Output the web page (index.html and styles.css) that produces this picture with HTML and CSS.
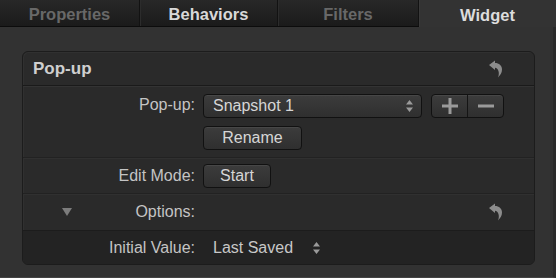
FILE: index.html
```html
<!DOCTYPE html>
<html>
<head>
<meta charset="utf-8">
<link rel="stylesheet" href="styles.css">
</head>
<body>
<div class="tabs">
  <div class="tab t1">Properties</div>
  <div class="tab t2 bright">Behaviors</div>
  <div class="tab t3">Filters</div>
  <div class="tab t4 selected">Widget</div>
</div>
<div class="main">
  <div class="panel">
    <div class="header">
      <span class="title">Pop-up</span>
      <svg class="undo" width="14" height="18" viewBox="0 0 14 18"><path d="M0 5 L6 0.5 L6 3 C10 3 13 5.5 13 9.5 C13 12.5 11.5 15 9 17.5 C10 14.8 10 12.8 9.5 11.2 C9 9.2 7.6 7.8 6 7.8 L6 10 Z" fill="#8c8c8c"/></svg>
    </div>
    <div class="row popuprow">
      <div class="label">Pop-up:</div>
      <div class="ctrls">
        <div class="line">
          <div class="btn popup"><span>Snapshot 1</span>
            <svg width="9" height="14" viewBox="0 0 9 14"><path d="M4.5 1 L8 5.5 L1 5.5 Z M4.5 13 L8 8.5 L1 8.5 Z" fill="#9a9a9a"/></svg>
          </div>
          <div class="btn pm">
            <div class="seg"><svg width="16" height="16" viewBox="0 0 16 16"><path d="M6.5 0 H9.5 V6.5 H16 V9.5 H9.5 V16 H6.5 V9.5 H0 V6.5 H6.5 Z" fill="#9a9a9a"/></svg></div>
            <div class="seg"><svg width="16" height="16" viewBox="0 0 16 16"><rect x="0" y="6.5" width="16" height="3" fill="#9a9a9a"/></svg></div>
          </div>
        </div>
        <div class="btn rename">Rename</div>
      </div>
    </div>
    <div class="row editrow">
      <div class="label">Edit Mode:</div>
      <div class="ctrls"><div class="btn start">Start</div></div>
    </div>
    <div class="row optrow">
      <div class="label"><span class="tri"></span>Options:</div>
      <div class="ctrls grow"></div>
      <svg class="undo" width="14" height="18" viewBox="0 0 14 18"><path d="M0 5 L6 0.5 L6 3 C10 3 13 5.5 13 9.5 C13 12.5 11.5 15 9 17.5 C10 14.8 10 12.8 9.5 11.2 C9 9.2 7.6 7.8 6 7.8 L6 10 Z" fill="#8c8c8c"/></svg>
    </div>
    <div class="row initrow">
      <div class="label">Initial Value:</div>
      <div class="ctrls plain"><span>Last Saved</span>
        <svg width="9" height="14" viewBox="0 0 9 14"><path d="M4.5 1 L8 5.5 L1 5.5 Z M4.5 13 L8 8.5 L1 8.5 Z" fill="#9a9a9a"/></svg>
      </div>
    </div>
  </div>
</div>
</body>
</html>
```
FILE: styles.css
```css
html, body {
  margin: 0;
  padding: 0;
  width: 556px;
  height: 278px;
  overflow: hidden;
  background: #323232;
  font-family: "Liberation Sans", Arial, sans-serif;
}
.tabs {
  display: flex;
  height: 26px;
  border-bottom: 1px solid #0c0c0c;
  background: linear-gradient(#282828, #1b1b1b);
}
.tab {
  display: flex;
  align-items: center;
  justify-content: center;
  padding-top: 3px;
  box-sizing: border-box;
  font-size: 16.5px;
  font-weight: bold;
  color: #686868;
  border-right: 1px solid #121212;
  box-shadow: inset 1px 0 0 #2c2c2c;
}
.t1 { width: 140px; box-shadow: none; }
.t2 { width: 138px; }
.t3 { width: 141px; }
.t4 { flex: 1; border-right: none; }
.bright { color: #d8d8d8; }
.selected {
  color: #dcdcdc;
  background: #333333;
  margin-bottom: -1px;
  box-shadow: inset 1px 0 0 #3a3a3a;
}
.main {
  height: 251px;
  padding: 24px 19px 0 22px;
  box-sizing: border-box;
  border-right: 3px solid #2a2a2a;
  border-bottom: 1px solid #444;
}
.panel {
  width: 513px;
  height: 214px;
  box-sizing: border-box;
  background: #2a2a2a;
  border: 1px solid #1c1c1c;
  border-radius: 6px;
  box-shadow: inset 1px 1px 0 #303030;
  overflow: hidden;
  display: flex;
  flex-direction: column;
}
.header {
  height: 33px;
  flex: none;
  display: flex;
  align-items: center;
  justify-content: space-between;
  padding: 0 31px 0 10px;
  border-bottom: 1px solid #1a1a1a;
  box-shadow: 0 1px 0 #333;
}
.title {
  font-size: 17px;
  font-weight: bold;
  color: #cfcfcf;
}
.undo { display: block; }
.row {
  display: flex;
  border-bottom: 1px solid #222;
  box-shadow: 0 1px 0 #303030;
}
.label {
  width: 172px;
  flex: none;
  text-align: right;
  font-size: 16px;
  color: #c4c4c4;
  display: flex;
  align-items: center;
  justify-content: flex-end;
  position: relative;
}
.ctrls {
  margin-left: 8px;
  display: flex;
  flex-direction: column;
  gap: 8px;
}
.line { display: flex; gap: 9px; }
.btn {
  box-sizing: border-box;
  height: 24px;
  border: 1px solid #111;
  border-radius: 4px;
  background: linear-gradient(#3c3c3c, #2f2f2f);
  box-shadow: inset 0 1px 0 #474747;
  color: #d6d6d6;
  font-size: 16px;
  display: flex;
  align-items: center;
  justify-content: center;
}
.popuprow {
  padding: 8px 0 7px;
  height: 72px;
  box-sizing: border-box;
}
.popuprow .label { align-items: flex-start; padding-top: 2px; height: 20px; }
.popup {
  width: 219px;
  justify-content: space-between;
  padding: 0 7px 0 9px;
}
.pm { width: 73px; padding: 0; }
.seg {
  flex: 1;
  height: 100%;
  display: flex;
  align-items: center;
  justify-content: center;
}
.seg + .seg { border-left: 1px solid #151515; }
.rename { width: 99px; }
.editrow {
  height: 36px;
  box-sizing: border-box;
  align-items: center;
}
.start { width: 68px; }
.optrow {
  height: 37px;
  box-sizing: border-box;
  align-items: center;
  padding-right: 31px;
  border-bottom: 1px solid #1c1c1c;
}
.grow { flex: 1; }
.tri {
  position: absolute;
  left: 39px;
  top: 50%;
  margin-top: -4px;
  width: 0;
  height: 0;
  border-left: 5px solid transparent;
  border-right: 5px solid transparent;
  border-top: 8px solid #7c7c7c;
}
.initrow {
  flex: 1;
  background: #232323;
  align-items: center;
  border-bottom: none;
  box-shadow: none;
}
.plain {
  flex-direction: row;
  align-items: center;
  gap: 19px;
  font-size: 16px;
  color: #c8c8c8;
  padding-left: 10px;
}
```
